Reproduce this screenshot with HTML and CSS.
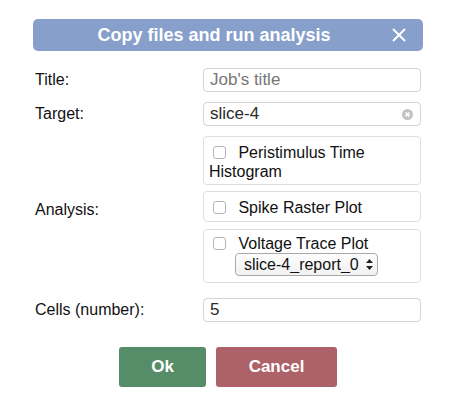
FILE: index.html
```html
<!DOCTYPE html>
<html>
<head>
<meta charset="utf-8">
<link rel="stylesheet" href="styles.css">
</head>
<body>
<div class="dialog">
  <div class="header">
    <span class="header-title">Copy files and run analysis</span>
    <button class="close" aria-label="Close">
      <svg width="14" height="14" viewBox="0 0 14 14"><path d="M1 1 L13 13 M13 1 L1 13" stroke="#fff" stroke-width="2" fill="none"/></svg>
    </button>
  </div>
  <form class="form">
    <label class="label">Title:</label>
    <div class="control"><input class="text" type="text" placeholder="Job's title"></div>

    <label class="label">Target:</label>
    <div class="control search">
      <input class="text" type="text" value="slice-4">
      <span class="clear"><svg width="11" height="11" viewBox="0 0 11 11"><circle cx="5.5" cy="5.5" r="5.5" fill="#c3c3c3"/><path d="M3.6 3.6 L7.4 7.4 M7.4 3.6 L3.6 7.4" stroke="#fff" stroke-width="1.6"/></svg></span>
    </div>

    <label class="label">Analysis:</label>
    <div class="control group">
      <div class="box box-psth"><input type="checkbox" class="cb"> Peristimulus Time Histogram</div>
      <div class="box box-spike"><input type="checkbox" class="cb"> Spike Raster Plot</div>
      <div class="box box-volt"><input type="checkbox" class="cb"> Voltage Trace Plot
        <span class="select-wrap"><select class="select"><option>slice-4_report_0</option></select><svg class="arrows" width="7" height="11" viewBox="0 0 7 11"><path d="M3.5 0 L7 4 L0 4 Z M0 7 L7 7 L3.5 11 Z" fill="#222"/></svg></span>
      </div>
    </div>

    <label class="label cells-label">Cells (number):</label>
    <div class="control cells"><input class="text" type="text" value="5"></div>
  </form>
  <div class="buttons">
    <button class="btn ok">Ok</button>
    <button class="btn cancel">Cancel</button>
  </div>
</div>
</body>
</html>
```
FILE: styles.css
```css
html, body {
  margin: 0;
  padding: 0;
  background: #fff;
}
body {
  font-family: "Liberation Sans", Arial, sans-serif;
  color: #111;
}
.dialog {
  width: 390px;
  margin: 19px 0 0 33px;
}
.header {
  height: 32px;
  background: #87a0cb;
  border-radius: 5px;
  display: flex;
  align-items: center;
}
.header-title {
  flex: 1;
  text-align: center;
  color: #fff;
  font-weight: bold;
  font-size: 18px;
  padding-left: 11px;
}
.close {
  width: 30px;
  height: 32px;
  border: 0;
  background: none;
  padding: 0;
  margin-right: 9px;
  display: flex;
  align-items: center;
  justify-content: center;
}
.form {
  display: grid;
  grid-template-columns: 168px 218px;
  margin: 17px 0 0 2px;
  row-gap: 10px;
  align-items: center;
}
.label {
  font-size: 16px;
  color: #111;
}
.control {
  position: relative;
}
.text {
  box-sizing: border-box;
  display: block;
  width: 218px;
  height: 24px;
  border: 1px solid #d3d3d3;
  border-radius: 4px;
  font-family: "Liberation Sans", Arial, sans-serif;
  font-size: 17px;
  color: #2a2a2a;
  padding: 0 6px;
  margin: 0;
  outline: none;
}
.text::placeholder {
  color: #767676;
}
.clear {
  position: absolute;
  right: 8px;
  top: 7px;
  width: 11px;
  height: 11px;
  display: flex;
}
.group {
  display: flex;
  flex-direction: column;
  gap: 6px;
}
.box {
  box-sizing: border-box;
  border: 1px solid #dedede;
  border-radius: 4px;
  font-size: 16px;
  line-height: 19px;
  padding: 6px 5px 3px 5px;
}
.box-spike {
  padding: 6px 5px 4px 5px;
}
.box-volt {
  margin-top: 1px;
  padding: 4px 5px 6px 5px;
}
.cb {
  -webkit-appearance: none;
  appearance: none;
  box-sizing: border-box;
  width: 13px;
  height: 13px;
  border: 1px solid #b5b5b5;
  border-radius: 3px;
  background: #fff;
  margin: 0 8px 0 4px;
  vertical-align: -1px;
}
.select-wrap {
  position: relative;
  display: inline-block;
  margin-left: 26px;
  margin-top: 0;
  vertical-align: top;
}
.select {
  -webkit-appearance: none;
  appearance: none;
  box-sizing: border-box;
  width: 143px;
  height: 23px;
  border: 1px solid #a9a9a9;
  border-radius: 4px;
  background: linear-gradient(#fdfdfd, #f1f1f1);
  font-family: "Liberation Sans", Arial, sans-serif;
  font-size: 16px;
  color: #111;
  padding: 0 0 0 8px;
  margin: 0;
  display: block;
}
.arrows {
  position: absolute;
  right: 5px;
  top: 6px;
}
.cells {
  margin-top: 5px;
}
.cells-label {
  margin-top: 5px;
}
.buttons {
  display: flex;
  justify-content: center;
  gap: 10px;
  margin-top: 25px;
}
.btn {
  height: 40px;
  border: 0;
  border-radius: 3px;
  color: #fff;
  font-family: "Liberation Sans", Arial, sans-serif;
  font-weight: bold;
  font-size: 17px;
  padding: 0;
}
.ok {
  width: 87px;
  background: #558d69;
}
.cancel {
  width: 121px;
  background: #ad6168;
}
```
